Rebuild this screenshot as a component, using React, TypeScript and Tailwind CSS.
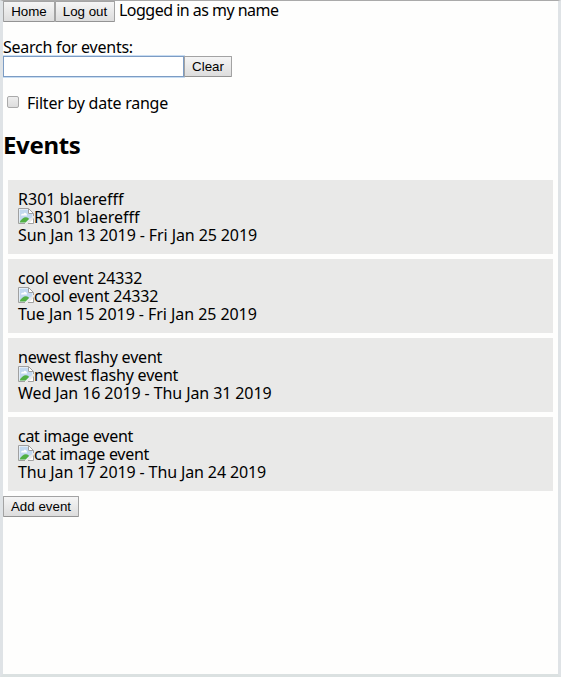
import type { ReactNode } from "react";

type EventItem = { title: string; dates: string; titleTracking: string; dateTracking: string };

const events: EventItem[] = [
  { title: "R301 blaerefff", dates: "Sun Jan 13 2019 - Fri Jan 25 2019", titleTracking: "tracking-[0.02px]", dateTracking: "tracking-[-0.1px]" },
  { title: "cool event 24332", dates: "Tue Jan 15 2019 - Fri Jan 25 2019", titleTracking: "tracking-[-0.16px]", dateTracking: "tracking-[-0.06px]" },
  { title: "newest flashy event", dates: "Wed Jan 16 2019 - Thu Jan 31 2019", titleTracking: "tracking-[-0.19px]", dateTracking: "tracking-[-0.1px]" },
  { title: "cat image event", dates: "Thu Jan 17 2019 - Thu Jan 24 2019", titleTracking: "tracking-[-0.28px]", dateTracking: "tracking-[-0.12px]" },
];

function Button({ children, width }: { children: ReactNode; width: string }) {
  return (
    <button
      className={`h-[21px] shrink-0 rounded-[1px] border border-[#a3a3a3] border-b-[#949494] bg-linear-to-b from-[#f5f5f5] to-[#dddddd] text-center font-['Liberation_Sans',Arial,sans-serif] text-[13.333px] leading-[19px] whitespace-nowrap text-black ${width}`}
    >
      {children}
    </button>
  );
}

function BrokenImage() {
  return (
    <svg width="16" height="16" viewBox="0 0 16 16" className="shrink-0" aria-hidden="true">
      <path d="M.5 .5H10.5L15.5 5.5V15.5H.5Z" fill="#fff" />
      <path d="M1.5 1.5H10V6H14.5V9L8 14.5H1.5Z" fill="#c3d9f0" />
      <path d="M3 7.5C3 5.5 5 5.5 5.5 6C6 4 9 4.5 9 7.5Z" fill="#fff" />
      <path d="M1.5 14.5C3 11 6 9 8 9.2C9.5 9.3 10.5 10 11 11L7.5 14.5Z" fill="#52b043" />
      <path d="M16 7.5L7 16H10L16 10.5Z" fill="#e9e9e8" />
      <path d="M7 15.5H.5V.5H10.5L15.5 5.5V8M10.5 .5V5.5H15.5M10 15.5H15.5V10.5" fill="none" stroke="#a0a0a0" />
    </svg>
  );
}

export default function App() {
  return (
    <div className="h-[677px] w-[561px] overflow-hidden border-x-[3px] border-t border-b-[3px] border-x-[#dfe3e6] border-t-[#aaaaaa] border-b-[#dbe1e1] bg-[#fefefd] font-['Noto_Sans','Open_Sans',sans-serif] text-[16px] leading-[18px] text-black">
      <div className="flex h-[37px] items-start">
        <Button width="w-[52px]">Home</Button>
        <Button width="w-[60px]">Log out</Button>
        <span className="ml-1 tracking-[-0.52px] whitespace-nowrap">Logged in as my name</span>
      </div>
      <label className="flex h-[18px] tracking-[-0.24px] whitespace-nowrap">
        <span>Search for events:</span>
      </label>
      <div className="flex h-[21px]">
        <input className="h-[21px] w-[181px] border border-[#7c9cc4] bg-white outline-1 outline-[#c7dcf2]" />
        <Button width="w-[48px]">Clear</Button>
      </div>
      <div className="mt-[17px] flex h-[18px] items-start">
        <span className="mt-[2px] ml-1 size-3 rounded-[2px] border border-[#aaaaaa] bg-linear-to-b from-[#eeeeee] to-[#dddddd]" />
        <span className="ml-2 tracking-[-0.24px] whitespace-nowrap">Filter by date range</span>
      </div>
      <h1 className="mt-[19px] h-[28px] text-[24px] leading-[28px] font-bold tracking-[-0.35px]">
        <span>Events</span>
      </h1>
      <ul className="mx-[5px] mt-[21px] flex flex-col gap-[5px]">
        {events.map((e) => (
          <li key={e.title} className="h-[74px] bg-[#e9e9e8] p-[10px] whitespace-nowrap">
            <div className="h-[18px]">
              <span className={e.titleTracking}>{e.title}</span>
            </div>
            <div className="flex h-[18px] items-start">
              <BrokenImage />
              <span className={e.titleTracking}>{e.title}</span>
            </div>
            <div className="h-[18px]">
              <span className={e.dateTracking}>{e.dates}</span>
            </div>
          </li>
        ))}
      </ul>
      <div className="mt-[5px] flex">
        <Button width="w-[76px]">Add event</Button>
      </div>
    </div>
  );
}
